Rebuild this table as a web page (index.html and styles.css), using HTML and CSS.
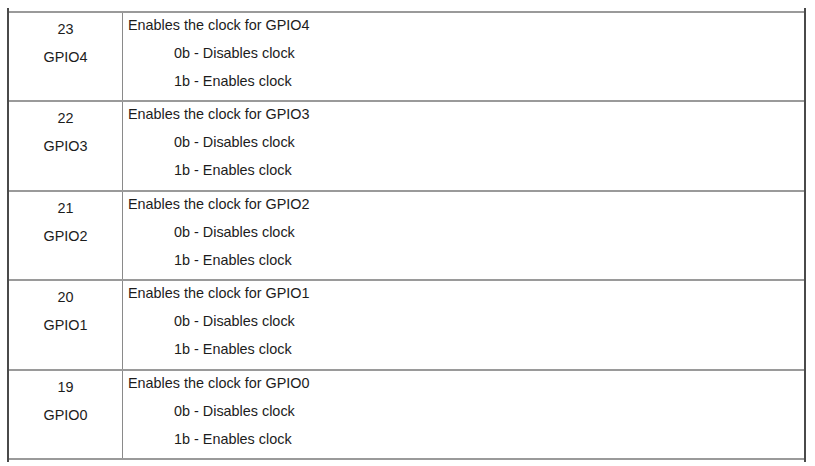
FILE: index.html
```html
<!DOCTYPE html>
<html>
<head>
<meta charset="utf-8">
<link rel="stylesheet" href="styles.css">
</head>
<body>
<div class="table">
  <div class="row r1">
    <div class="bit"><div>23</div><div>GPIO4</div></div>
    <div class="desc"><div>Enables the clock for GPIO4</div><div class="opt">0b - Disables clock</div><div class="opt">1b - Enables clock</div></div>
  </div>
  <div class="row r2">
    <div class="bit"><div>22</div><div>GPIO3</div></div>
    <div class="desc"><div>Enables the clock for GPIO3</div><div class="opt">0b - Disables clock</div><div class="opt">1b - Enables clock</div></div>
  </div>
  <div class="row r3">
    <div class="bit"><div>21</div><div>GPIO2</div></div>
    <div class="desc"><div>Enables the clock for GPIO2</div><div class="opt">0b - Disables clock</div><div class="opt">1b - Enables clock</div></div>
  </div>
  <div class="row r4">
    <div class="bit"><div>20</div><div>GPIO1</div></div>
    <div class="desc"><div>Enables the clock for GPIO1</div><div class="opt">0b - Disables clock</div><div class="opt">1b - Enables clock</div></div>
  </div>
  <div class="row r5">
    <div class="bit"><div>19</div><div>GPIO0</div></div>
    <div class="desc"><div>Enables the clock for GPIO0</div><div class="opt">0b - Disables clock</div><div class="opt">1b - Enables clock</div></div>
  </div>
</div>
</body>
</html>
```
FILE: styles.css
```css
html, body {
  margin: 0;
  padding: 0;
  background: #ffffff;
}
body {
  font-family: "Liberation Sans", Arial, sans-serif;
  font-size: 14.4px;
  color: #1c1c1c;
}
.table {
  margin: 8px 0 0 7px;
  width: 795px;
  border-left: 2px solid #4a4a4a;
  border-right: 2px solid #4a4a4a;
  padding-top: 3px;
  padding-bottom: 2px;
}
.row {
  display: flex;
  border-top: 2px solid #9a9a9a;
  box-sizing: border-box;
}
.r1, .r3, .r5 { height: 89px; }
.r2, .r4 { height: 90px; }
.r5 { border-bottom: 2px solid #9a9a9a; height: 91px; }
.bit {
  width: 113px;
  border-right: 1px solid #8a8a8a;
  display: flex;
  flex-direction: column;
  align-items: center;
  gap: 4px;
  padding-top: 4px;
  line-height: 24px;
}
.desc {
  flex: 1;
  display: flex;
  flex-direction: column;
  gap: 4px;
  padding-left: 5px;
  line-height: 24px;
}
.opt {
  padding-left: 46px;
}
```
